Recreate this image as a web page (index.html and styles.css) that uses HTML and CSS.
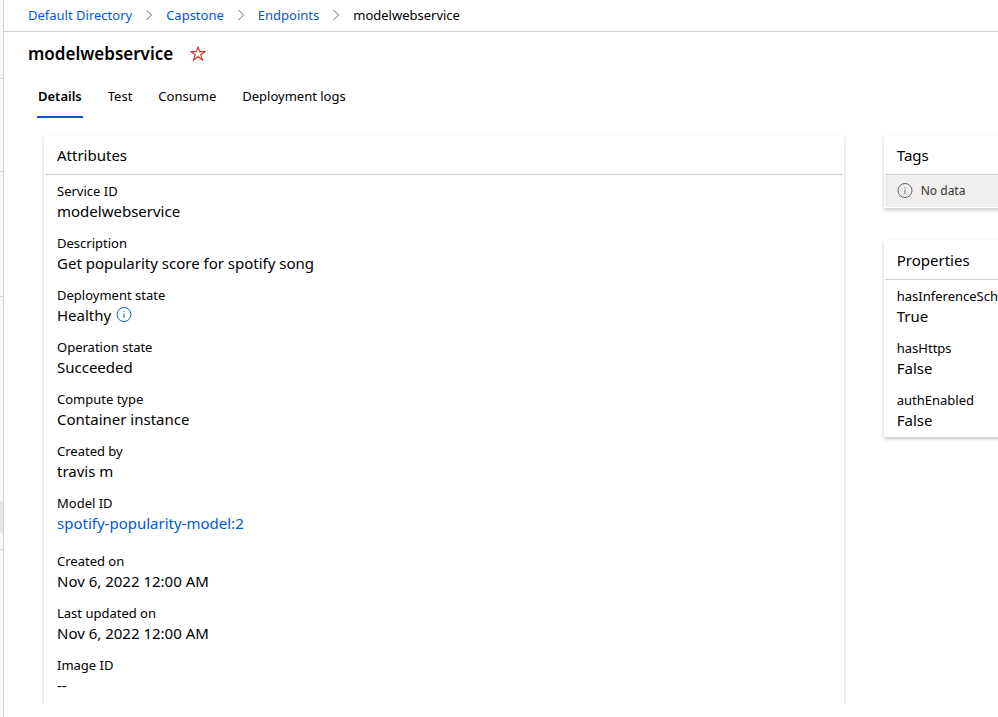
FILE: index.html
```html
<!DOCTYPE html>
<html lang="en">
<head>
<meta charset="utf-8">
<title>modelwebservice</title>
<link rel="stylesheet" href="styles.css">
</head>
<body>
<aside class="rail">
  <div class="rail-group rail-first"></div>
  <div class="rail-group rail-second"></div>
  <div class="rail-group rail-third"></div>
  <div class="rail-group rail-fourth"><div class="rail-active"></div></div>
</aside>
<main class="page">
  <nav class="crumbs" aria-label="Breadcrumb">
    <a href="#">Default Directory</a>
    <svg class="chevron" viewBox="0 0 8 12"><path d="M1.5 1 6.5 6 1.5 11"/></svg>
    <a href="#">Capstone</a>
    <svg class="chevron" viewBox="0 0 8 12"><path d="M1.5 1 6.5 6 1.5 11"/></svg>
    <a href="#">Endpoints</a>
    <svg class="chevron" viewBox="0 0 8 12"><path d="M1.5 1 6.5 6 1.5 11"/></svg>
    <span>modelwebservice</span>
  </nav>
  <header class="heading">
    <h1>modelwebservice</h1>
    <button class="favorite" type="button" aria-label="Add to favorites">
      <svg viewBox="0 0 16 16"><path d="M8 1 9.7 5.7H14.9L10.8 8.8 12.4 13.9 8 10.8 3.6 13.9 5.2 8.8 1.1 5.7H6.3Z"/></svg>
    </button>
  </header>
  <div class="tabs" role="tablist">
    <button class="tab selected" type="button" role="tab" aria-selected="true">Details</button>
    <button class="tab" type="button" role="tab" aria-selected="false">Test</button>
    <button class="tab" type="button" role="tab" aria-selected="false">Consume</button>
    <button class="tab" type="button" role="tab" aria-selected="false">Deployment logs</button>
  </div>
  <div class="content">
    <section class="card">
      <h2>Attributes</h2>
      <dl class="fields">
        <div><dt>Service ID</dt><dd>modelwebservice</dd></div>
        <div><dt>Description</dt><dd>Get popularity score for spotify song</dd></div>
        <div><dt>Deployment state</dt><dd class="with-icon">Healthy
          <svg class="info" viewBox="0 0 16 16"><circle cx="8" cy="7.5" r="7"/><path d="M8 6.5v4.5M8 4v1.2"/></svg></dd></div>
        <div><dt>Operation state</dt><dd>Succeeded</dd></div>
        <div><dt>Compute type</dt><dd>Container instance</dd></div>
        <div><dt>Created by</dt><dd>travis m</dd></div>
        <div class="link-field"><dt>Model ID</dt><dd><a href="#">spotify-popularity-model:2</a></dd></div>
        <div><dt>Created on</dt><dd>Nov 6, 2022 12:00 AM</dd></div>
        <div><dt>Last updated on</dt><dd>Nov 6, 2022 12:00 AM</dd></div>
        <div><dt>Image ID</dt><dd>--</dd></div>
      </dl>
    </section>
    <div class="side">
      <section class="card">
        <h2>Tags</h2>
        <p class="empty"><svg class="info" viewBox="0 0 16 16"><circle cx="8" cy="7.5" r="7"/><path d="M8 6.5v4.5M8 4v1.2"/></svg>No data</p>
      </section>
      <section class="card">
        <h2>Properties</h2>
        <dl class="fields">
          <div><dt>hasInferenceSchema</dt><dd>True</dd></div>
          <div><dt>hasHttps</dt><dd>False</dd></div>
          <div><dt>authEnabled</dt><dd>False</dd></div>
        </dl>
      </section>
    </div>
  </div>
</main>
</body>
</html>
```
FILE: styles.css
```css
* { box-sizing: border-box; }
body {
  margin: 0;
  height: 100vh;
  display: flex;
  overflow: hidden;
  background: #fff;
  color: #000;
  font: 13px/20px "Noto Sans", "Open Sans", sans-serif;
}
h1, h2, dl, dd, p { margin: 0; font-weight: 400; }
a { color: #0059d6; text-decoration: none; }
button { padding: 0; border: 0; background: none; color: inherit; font: inherit; }
svg { fill: none; stroke: currentColor; flex: none; }

.rail { width: 4px; flex: none; background: #f8f8f8; border-right: 1px solid #d0d0d0; }
.rail-group { border-bottom: 1px solid #d6d6d6; }
.rail-first { height: 79px; }
.rail-second { height: 93px; }
.rail-third { height: 125px; }
.rail-fourth { height: 253px; padding-top: 204px; }
.rail-active { height: 32px; background: #e6e6e6; border-radius: 0 2px 2px 0; }

.page { flex: 1; min-width: 0; display: flex; flex-direction: column; }
.crumbs {
  height: 32px;
  padding: 0 0 1px 24px;
  display: flex;
  align-items: center;
  gap: 13px;
  border-bottom: 1px solid #d0d0d0;
}
.chevron { width: 8px; height: 12px; color: #666; }
.heading { display: flex; align-items: center; gap: 17px; height: 44px; padding-left: 24px; }
h1 { font-size: 17px; line-height: 24px; font-weight: 600; color: #000; }
.favorite { display: flex; color: #d13a25; }
.favorite svg { width: 16px; height: 16px; stroke-width: 1.2; }
.tabs { display: flex; gap: 24px; padding-left: 33px; }
.tab { height: 42px; padding: 0 1px; border-bottom: 2px solid transparent; }
.tab.selected { font-weight: 600; color: #000; border-color: #0b53ce; }

.content {
  flex: 1;
  min-height: 0;
  overflow: hidden;
  margin-bottom: 13px;
  padding: 17px 0 0 40px;
  display: grid;
  grid-template-columns: minmax(0, 7fr) minmax(0, 1fr);
  gap: 40px;
}
.side { display: flex; flex-direction: column; gap: 32px; margin-right: -8px; }
.card { padding: 1px; background: #fff; box-shadow: 0 2px 4px rgba(0, 0, 0, .22); }
h2 { height: 39px; padding-left: 12px; font-size: 15px; line-height: 39px; border-bottom: 1px solid #d0d0d0; }
.fields { padding: 6px 12px; display: flex; flex-direction: column; gap: 12px; white-space: nowrap; }
dd { font-size: 15px; }
.link-field { padding-bottom: 6px; }
.with-icon { display: flex; align-items: center; gap: 5px; }
.info { width: 16px; height: 16px; }
.with-icon .info { color: #0b5cd0; }
.empty {
  height: 32px;
  padding-left: 12px;
  display: flex;
  align-items: center;
  gap: 8px;
  background: #f0efee;
  color: #333;
  font-size: 12px;
}
.empty .info { color: #666; }
```
